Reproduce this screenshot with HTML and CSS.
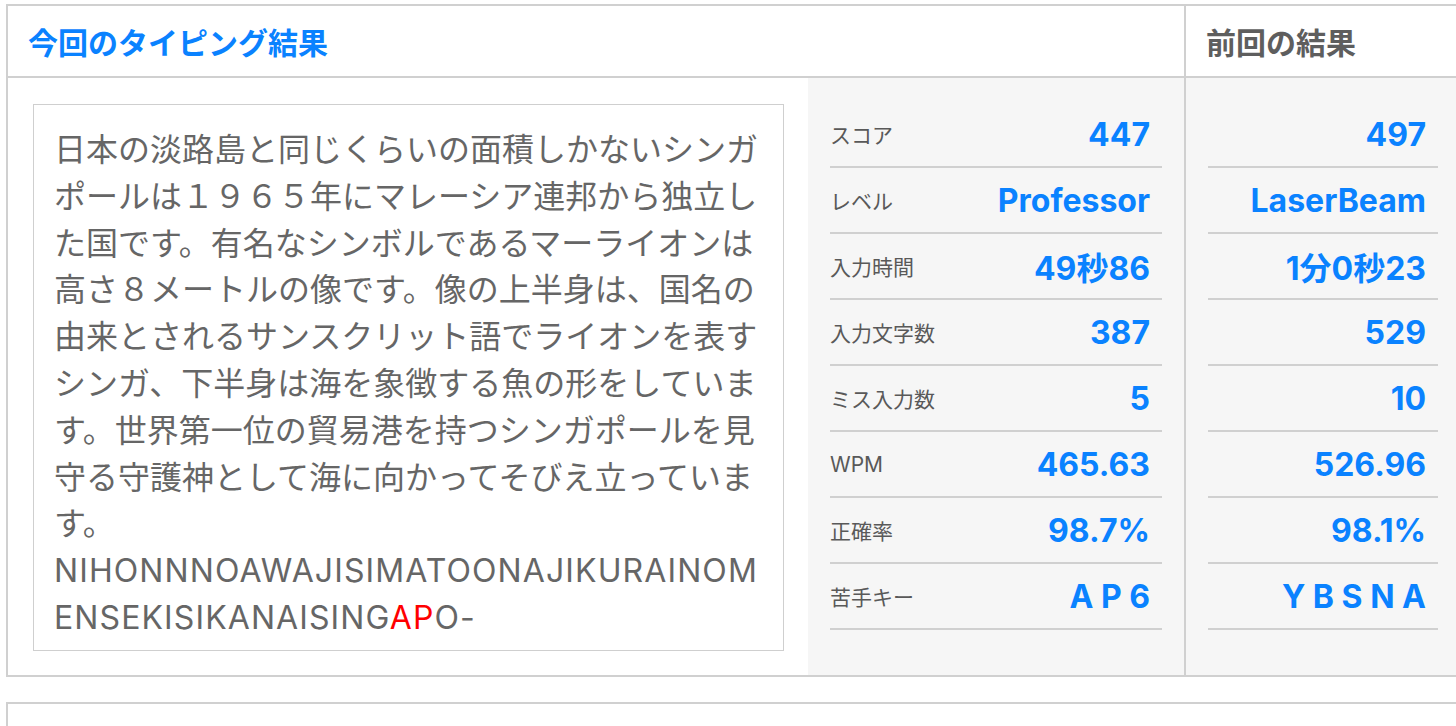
FILE: index.html
```html
<!DOCTYPE html>
<html lang="ja">
<head>
<meta charset="utf-8">
<title>タイピング結果</title>
<link rel="stylesheet" href="styles.css">
</head>
<body>
<div class="page">
  <section class="card result">
    <div class="head head-now">今回のタイピング結果</div>
    <div class="head head-prev">前回の結果</div>
    <div class="text-cell">
      <div class="typed">
        <p class="ja">日本の淡路島と同じくらいの面積しかないシンガポールは１９６５年にマレーシア連邦から独立した国です。有名なシンボルであるマーライオンは高さ８メートルの像です。像の上半身は、国名の由来とされるサンスクリット語でライオンを表すシンガ、下半身は海を象徴する魚の形をしています。世界第一位の貿易港を持つシンガポールを見守る守護神として海に向かってそびえ立っています。</p>
        <p class="roma">NIHONNNOAWAJISIMATOONAJIKURAINOMENSEKISIKANAISING<span class="miss">AP</span>O-</p>
      </div>
    </div>
    <div class="stats">
      <div class="row"><span class="label">スコア</span><span class="value">447</span></div>
      <div class="row"><span class="label">レベル</span><span class="value">Professor</span></div>
      <div class="row"><span class="label">入力時間</span><span class="value">49秒86</span></div>
      <div class="row"><span class="label">入力文字数</span><span class="value">387</span></div>
      <div class="row"><span class="label">ミス入力数</span><span class="value">5</span></div>
      <div class="row"><span class="label">WPM</span><span class="value">465.63</span></div>
      <div class="row"><span class="label">正確率</span><span class="value">98.7%</span></div>
      <div class="row"><span class="label">苦手キー</span><span class="value">A P 6</span></div>
    </div>
    <div class="stats prev">
      <div class="row"><span class="value">497</span></div>
      <div class="row"><span class="value">LaserBeam</span></div>
      <div class="row"><span class="value">1分0秒23</span></div>
      <div class="row"><span class="value">529</span></div>
      <div class="row"><span class="value">10</span></div>
      <div class="row"><span class="value">526.96</span></div>
      <div class="row"><span class="value">98.1%</span></div>
      <div class="row"><span class="value">Y B S N A</span></div>
    </div>
  </section>
  <section class="card next"></section>
</div>
</body>
</html>
```

FILE: styles.css
```css
html, body {
  margin: 0;
  overflow: hidden;
  background: #fff;
}

body {
  font-family: Inter, "Noto Sans CJK JP", sans-serif;
  color: #666;
}

.page {
  padding: 4px 0 0 6px;
  width: 1466px;
}

.card {
  border: 2px solid #d0d0d0;
}

.result {
  display: grid;
  grid-template-columns: 800px 376px 280px;
}

.head {
  height: 70px;
  display: flex;
  align-items: center;
  padding: 0 20px;
  border-bottom: 2px solid #d0d0d0;
  font-size: 30px;
  font-weight: 700;
}

.head-now {
  grid-column: span 2;
  color: #0a82ff;
}

.head-prev {
  border-left: 2px solid #d0d0d0;
  color: #5e5e5e;
}

.text-cell {
  display: flex;
  padding: 26px 24px 24px 25px;
}

.typed {
  flex: 1;
  border: 1px solid #cfcfcf;
  padding: 22px 20px 0;
  font-size: 32px;
  line-height: 46.8px;
  color: #666;
}

.typed p {
  margin: 0;
}

.roma {
  letter-spacing: 1.1px;
  word-break: break-all;
}

.miss {
  color: #ff0000;
}

.stats {
  background: #f6f6f6;
  padding: 24px 22px 45px;
}

.prev {
  border-left: 2px solid #d0d0d0;
  padding: 24px 26px 45px 22px;
}

.row {
  height: 64px;
  border-bottom: 2px solid #d0d0d0;
  display: flex;
  align-items: center;
  justify-content: space-between;
}

.prev .row {
  justify-content: flex-end;
}

.label {
  font-size: 21px;
  color: #595959;
}

.value {
  font-size: 32px;
  font-weight: 700;
  color: #0a82ff;
  padding-right: 12px;
}

.next {
  margin-top: 25px;
  height: 60px;
}
```
